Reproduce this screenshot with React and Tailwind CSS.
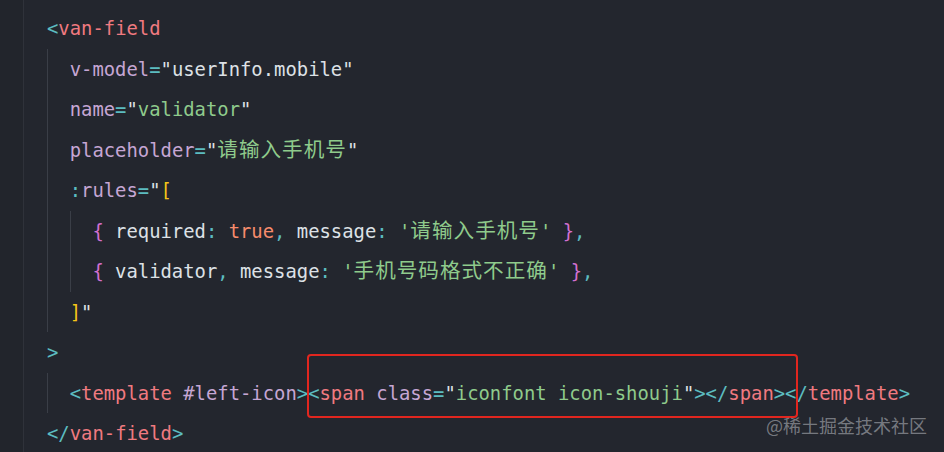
import React from "react";

// token colours, written out in full so Tailwind picks them up
const C = {
  br: "text-[#5cbcc0]", // < > </ = : ,
  tag: "text-[#f07a80]",
  attr: "text-[#c6a6d4]",
  str: "text-[#8fcb8c]",
  plain: "text-[#dde1e6]",
  brace: "text-[#d26fd0]",
  square: "text-[#f5c518]",
  bool: "text-[#f78c6c]",
};

const Cjk = ({ children, cls }) => (
  <span className={`${cls} font-['Noto_Sans_CJK_SC',sans-serif] text-[20.6px] leading-none tracking-[1px]`}>{children}</span>
);

const Line = ({ children }) => <div className="h-[40.5px] leading-[40.5px] whitespace-pre">{children}</div>;

const Block = ({ children }) => (
  <div className="border-l border-[#3a3e47] pl-[21.7px]">{children}</div>
);

export default function App() {
  return (
    <div className="relative w-[944px] h-[452px] overflow-hidden bg-[#23262e] flex font-['DejaVu_Sans_Mono',monospace] text-[18.87px]">
      <div className="w-[24px] shrink-0 bg-[#22252c] border-r border-[#2f323a]" />
      <div className="pl-[23px] pt-[8px]">
        <Line>
          <span className={C.br}>&lt;</span>
          <span className={C.tag}>van-field</span>
        </Line>
        <Block>
          <Line>
            <span className={C.attr}>v-model</span>
            <span className={C.br}>=</span>
            <span className={C.plain}>"userInfo.mobile"</span>
          </Line>
          <Line>
            <span className={C.attr}>name</span>
            <span className={C.br}>=</span>
            <span className={C.plain}>"</span>
            <span className={C.str}>validator</span>
            <span className={C.plain}>"</span>
          </Line>
          <Line>
            <span className={C.attr}>placeholder</span>
            <span className={C.br}>=</span>
            <span className={C.plain}>"</span>
            <Cjk cls={C.str}>请输入手机号</Cjk>
            <span className={C.plain}>"</span>
          </Line>
          <Line>
            <span className={C.br}>:</span>
            <span className={C.attr}>rules</span>
            <span className={C.br}>=</span>
            <span className={C.plain}>"</span>
            <span className={C.square}>[</span>
          </Line>
          <Block>
            <Line>
              <span className={C.brace}>{"{"}</span>
              <span className={C.plain}> required</span>
              <span className={C.br}>: </span>
              <span className={C.bool}>true</span>
              <span className={C.br}>, </span>
              <span className={C.plain}>message</span>
              <span className={C.br}>: </span>
              <span className={C.str}>'</span>
              <Cjk cls={C.str}>请输入手机号</Cjk>
              <span className={C.str}>' </span>
              <span className={C.brace}>{"}"}</span>
              <span className={C.br}>,</span>
            </Line>
            <Line>
              <span className={C.brace}>{"{"}</span>
              <span className={C.plain}> validator</span>
              <span className={C.br}>, </span>
              <span className={C.plain}>message</span>
              <span className={C.br}>: </span>
              <span className={C.str}>'</span>
              <Cjk cls={C.str}>手机号码格式不正确</Cjk>
              <span className={C.str}>' </span>
              <span className={C.brace}>{"}"}</span>
              <span className={C.br}>,</span>
            </Line>
          </Block>
          <Line>
            <span className={C.square}>]</span>
            <span className={C.plain}>"</span>
          </Line>
        </Block>
        <Line>
          <span className={C.br}>&gt;</span>
        </Line>
        <Block>
          <Line>
            <span className={C.br}>&lt;</span>
            <span className={C.tag}>template</span>
            <span className={C.attr}> #left-icon</span>
            <span className={C.br}>&gt;&lt;</span>
            <span className={C.tag}>span</span>
            <span className={C.attr}> class</span>
            <span className={C.br}>=</span>
            <span className={C.plain}>"</span>
            <span className={C.str}>iconfont icon-shouji</span>
            <span className={C.plain}>"</span>
            <span className={C.br}>&gt;&lt;/</span>
            <span className={C.tag}>span</span>
            <span className={C.br}>&gt;&lt;/</span>
            <span className={C.tag}>template</span>
            <span className={C.br}>&gt;</span>
          </Line>
        </Block>
        <Line>
          <span className={C.br}>&lt;/</span>
          <span className={C.tag}>van-field</span>
          <span className={C.br}>&gt;</span>
        </Line>
      </div>

      {/* annotation box */}
      <div className="absolute left-[307px] top-[354px] w-[491px] h-[64px] border-2 border-[#e1261f] rounded-[4px]" />

      {/* watermark */}
      <div className="absolute left-[766px] top-[412px] text-[18px] leading-[26px] text-[#8d9096]/80 font-['Noto_Sans_CJK_SC',sans-serif]">
        @稀土掘金技术社区
      </div>
    </div>
  );
}
